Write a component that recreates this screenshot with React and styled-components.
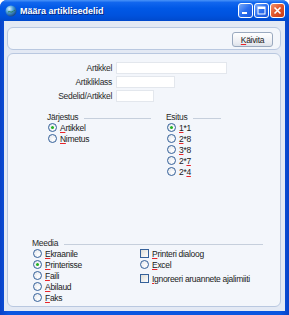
import React from 'react';
import styled, { createGlobalStyle } from 'styled-components';

const GlobalStyle = createGlobalStyle`
  html, body { margin: 0; padding: 0; background: #fff; }
  * { box-sizing: border-box; }
  body { font-family: "Liberation Sans", Arial, sans-serif; }
`;

const Window = styled.div`
  width: 289px;
  height: 315px;
  display: flex;
  flex-direction: column;
  background: linear-gradient(to right, #0842c8, #0a55e0 3%, #0a55e0 97%, #0842c8);
  border-radius: 7px 7px 0 0;
  overflow: hidden;
`;

const TitleBar = styled.div`
  height: 21px;
  flex: none;
  display: flex;
  align-items: center;
  padding: 0 4px 0 5px;
  background: linear-gradient(
    to bottom,
    #4a94f8 0%,
    #1166ee 12%,
    #0058e6 40%,
    #0052dd 75%,
    #0049cc 100%
  );
`;

const Title = styled.span`
  flex: 1;
  margin-left: 3px;
  color: #fff;
  font-weight: bold;
  font-size: 9px;
  text-shadow: 1px 1px 0 #0a2a80;
`;

const CaptionButton = styled.div`
  width: 15px;
  height: 15px;
  margin-left: 1px;
  border: 1px solid #fff;
  border-radius: 3px;
  display: flex;
  align-items: center;
  justify-content: center;
  background: ${(p) =>
    p.$close
      ? 'linear-gradient(135deg, #f0926c, #e0542a 50%, #c83c18)'
      : 'linear-gradient(135deg, #7aaaf8, #2a6ef0 50%, #1a55d8)'};
`;

const Client = styled.div`
  flex: 1;
  margin: 0 4px 4px 4px;
  background: #e3e9f4;
  display: flex;
  flex-direction: column;
  gap: 3px;
  padding: 6px 4px 4px 3px;
`;

const Panel = styled.div`
  background: #f3f6fb;
  border: 1px solid #b9c8e0;
  border-radius: 6px;
`;

const ToolPanel = styled(Panel)`
  height: 23px;
  flex: none;
  display: flex;
  align-items: center;
  justify-content: flex-end;
  padding: 2px 7px 0 0;
`;

const Button = styled.div`
  width: 41px;
  height: 15px;
  border: 1px solid #9aa9bf;
  border-radius: 3px;
  background: linear-gradient(#ffffff, #eceef3 70%, #dde2ea);
  font-size: 8.5px;
  letter-spacing: -0.3px;
  color: #222;
  display: flex;
  align-items: center;
  justify-content: center;
`;

const MainPanel = styled(Panel)`
  flex: 1;
  display: flex;
  flex-direction: column;
  padding: 7px 0 3px 0;
`;

const Fields = styled.div`
  display: grid;
  grid-template-columns: 104px auto;
  column-gap: 4px;
`;

const FieldLabel = styled.div`
  text-align: right;
  font-size: 8.5px;
  letter-spacing: -0.3px;
  line-height: 14px;
  color: #2a2a2a;
`;

const Input = styled.div`
  width: ${(p) => p.$w}px;
  height: 12px;
  margin-top: 1px;
  background: #fff;
  border: 1px solid #e3e7ed;
`;

const Groups = styled.div`
  display: flex;
  gap: 15px;
  margin-top: 8px;
  padding-left: 39px;
`;

const Group = styled.div`
  width: ${(p) => p.$w}px;
  display: flex;
  flex-direction: column;
`;

const Header = styled.div`
  height: 11px;
  display: flex;
  align-items: center;
  font-size: 8.5px;
  letter-spacing: -0.3px;
  color: #2a2a2a;
  &::after {
    content: '';
    flex: 1;
    height: 1px;
    margin-left: 6px;
    background: #c6cfdc;
    transform: translateY(2px);
  }
`;

const Option = styled.div`
  height: 11px;
  display: flex;
  align-items: center;
  gap: 3px;
  padding-left: 1px;
  margin-top: ${(p) => p.$gap || 0}px;
  font-size: 8.5px;
  letter-spacing: -0.3px;
  color: #1a1a1a;
  white-space: nowrap;
`;

const Radio = styled.span`
  width: 9px;
  height: 9px;
  flex: none;
  border: 1px solid #35619a;
  border-radius: 50%;
  background: radial-gradient(circle at 65% 65%, #ffffff, #dfe3e9);
  display: flex;
  align-items: center;
  justify-content: center;
  &::after {
    content: '';
    width: 3px;
    height: 3px;
    border-radius: 50%;
    background: ${(p) => (p.$checked ? '#24b024' : 'transparent')};
  }
`;

const Check = styled.span`
  width: 9px;
  height: 9px;
  flex: none;
  border: 1px solid #35619a;
  background: linear-gradient(135deg, #dcdcd6, #ffffff);
`;

const Key = styled.span`
  text-decoration: underline;
  text-decoration-color: #e8242a;
  text-underline-offset: 1px;
`;

const Media = styled.div`
  margin-top: auto;
  padding: 0 17px 0 24px;
  display: flex;
  flex-direction: column;
`;

const MediaCols = styled.div`
  display: grid;
  grid-template-columns: 107px auto;
`;

const Col = styled.div`
  display: flex;
  flex-direction: column;
`;

const Label = ({ text, k = 0 }) => (
  <span>
    {text.slice(0, k)}
    <Key>{text[k]}</Key>
    {text.slice(k + 1)}
  </span>
);

const Opt = ({ kind = 'radio', checked, text, k, gap }) => (
  <Option $gap={gap}>
    {kind === 'radio' ? <Radio $checked={checked} /> : <Check />}
    <Label text={text} k={k} />
  </Option>
);

const Globe = () => (
  <svg width="12" height="12" viewBox="0 0 12 12">
    <defs>
      <radialGradient id="g" cx="35%" cy="30%" r="70%">
        <stop offset="0" stopColor="#d8f0ff" />
        <stop offset="0.5" stopColor="#4aa0d8" />
        <stop offset="1" stopColor="#1a4a8a" />
      </radialGradient>
    </defs>
    <circle cx="6" cy="6" r="5.5" fill="url(#g)" />
    <path d="M3 7c1.5-1 2.5 0.5 4 0s1.5-2 3-1.5" stroke="#2a7a5a" strokeWidth="1" fill="none" />
  </svg>
);

export default function App() {
  return (
    <>
      <GlobalStyle />
      <Window>
        <TitleBar>
          <Globe />
          <Title>Määra artiklisedelid</Title>
          <CaptionButton>
            <svg width="13" height="13" viewBox="0 0 13 13">
              <rect x="3" y="8" width="5" height="2" fill="#fff" />
            </svg>
          </CaptionButton>
          <CaptionButton>
            <svg width="13" height="13" viewBox="0 0 13 13">
              <rect x="3" y="3" width="7" height="7" fill="none" stroke="#fff" strokeWidth="1" />
              <rect x="3" y="3" width="7" height="2" fill="#fff" />
            </svg>
          </CaptionButton>
          <CaptionButton $close>
            <svg width="13" height="13" viewBox="0 0 13 13">
              <path d="M3.5 3.5l6 6M9.5 3.5l-6 6" stroke="#fff" strokeWidth="1.6" />
            </svg>
          </CaptionButton>
        </TitleBar>
        <Client>
          <ToolPanel>
            <Button>
              <Label text="Käivita" />
            </Button>
          </ToolPanel>
          <MainPanel>
            <Fields>
              <FieldLabel>Artikkel</FieldLabel>
              <Input $w={111} />
              <FieldLabel>Artikliklass</FieldLabel>
              <Input $w={59} />
              <FieldLabel>Sedelid/Artikkel</FieldLabel>
              <Input $w={38} />
            </Fields>
            <Groups>
              <Group $w={104}>
                <Header>Järjestus</Header>
                <Opt checked text="Artikkel" />
                <Opt text="Nimetus" />
              </Group>
              <Group $w={55}>
                <Header>Esitus</Header>
                <Opt checked text="1*1" />
                <Opt text="2*8" />
                <Opt text="3*8" />
                <Opt text="2*7" k={2} />
                <Opt text="2*4" k={2} />
              </Group>
            </Groups>
            <Media>
              <Header>Meedia</Header>
              <MediaCols>
                <Col>
                  <Opt text="Ekraanile" />
                  <Opt checked text="Printerisse" />
                  <Opt text="Faili" />
                  <Opt text="Abilaud" />
                  <Opt text="Faks" />
                </Col>
                <Col>
                  <Opt kind="check" text="Printeri dialoog" />
                  <Opt text="Excel" />
                  <Opt kind="check" text="Ignoreeri aruannete ajalimiiti" gap={3} />
                </Col>
              </MediaCols>
            </Media>
          </MainPanel>
        </Client>
      </Window>
    </>
  );
}
